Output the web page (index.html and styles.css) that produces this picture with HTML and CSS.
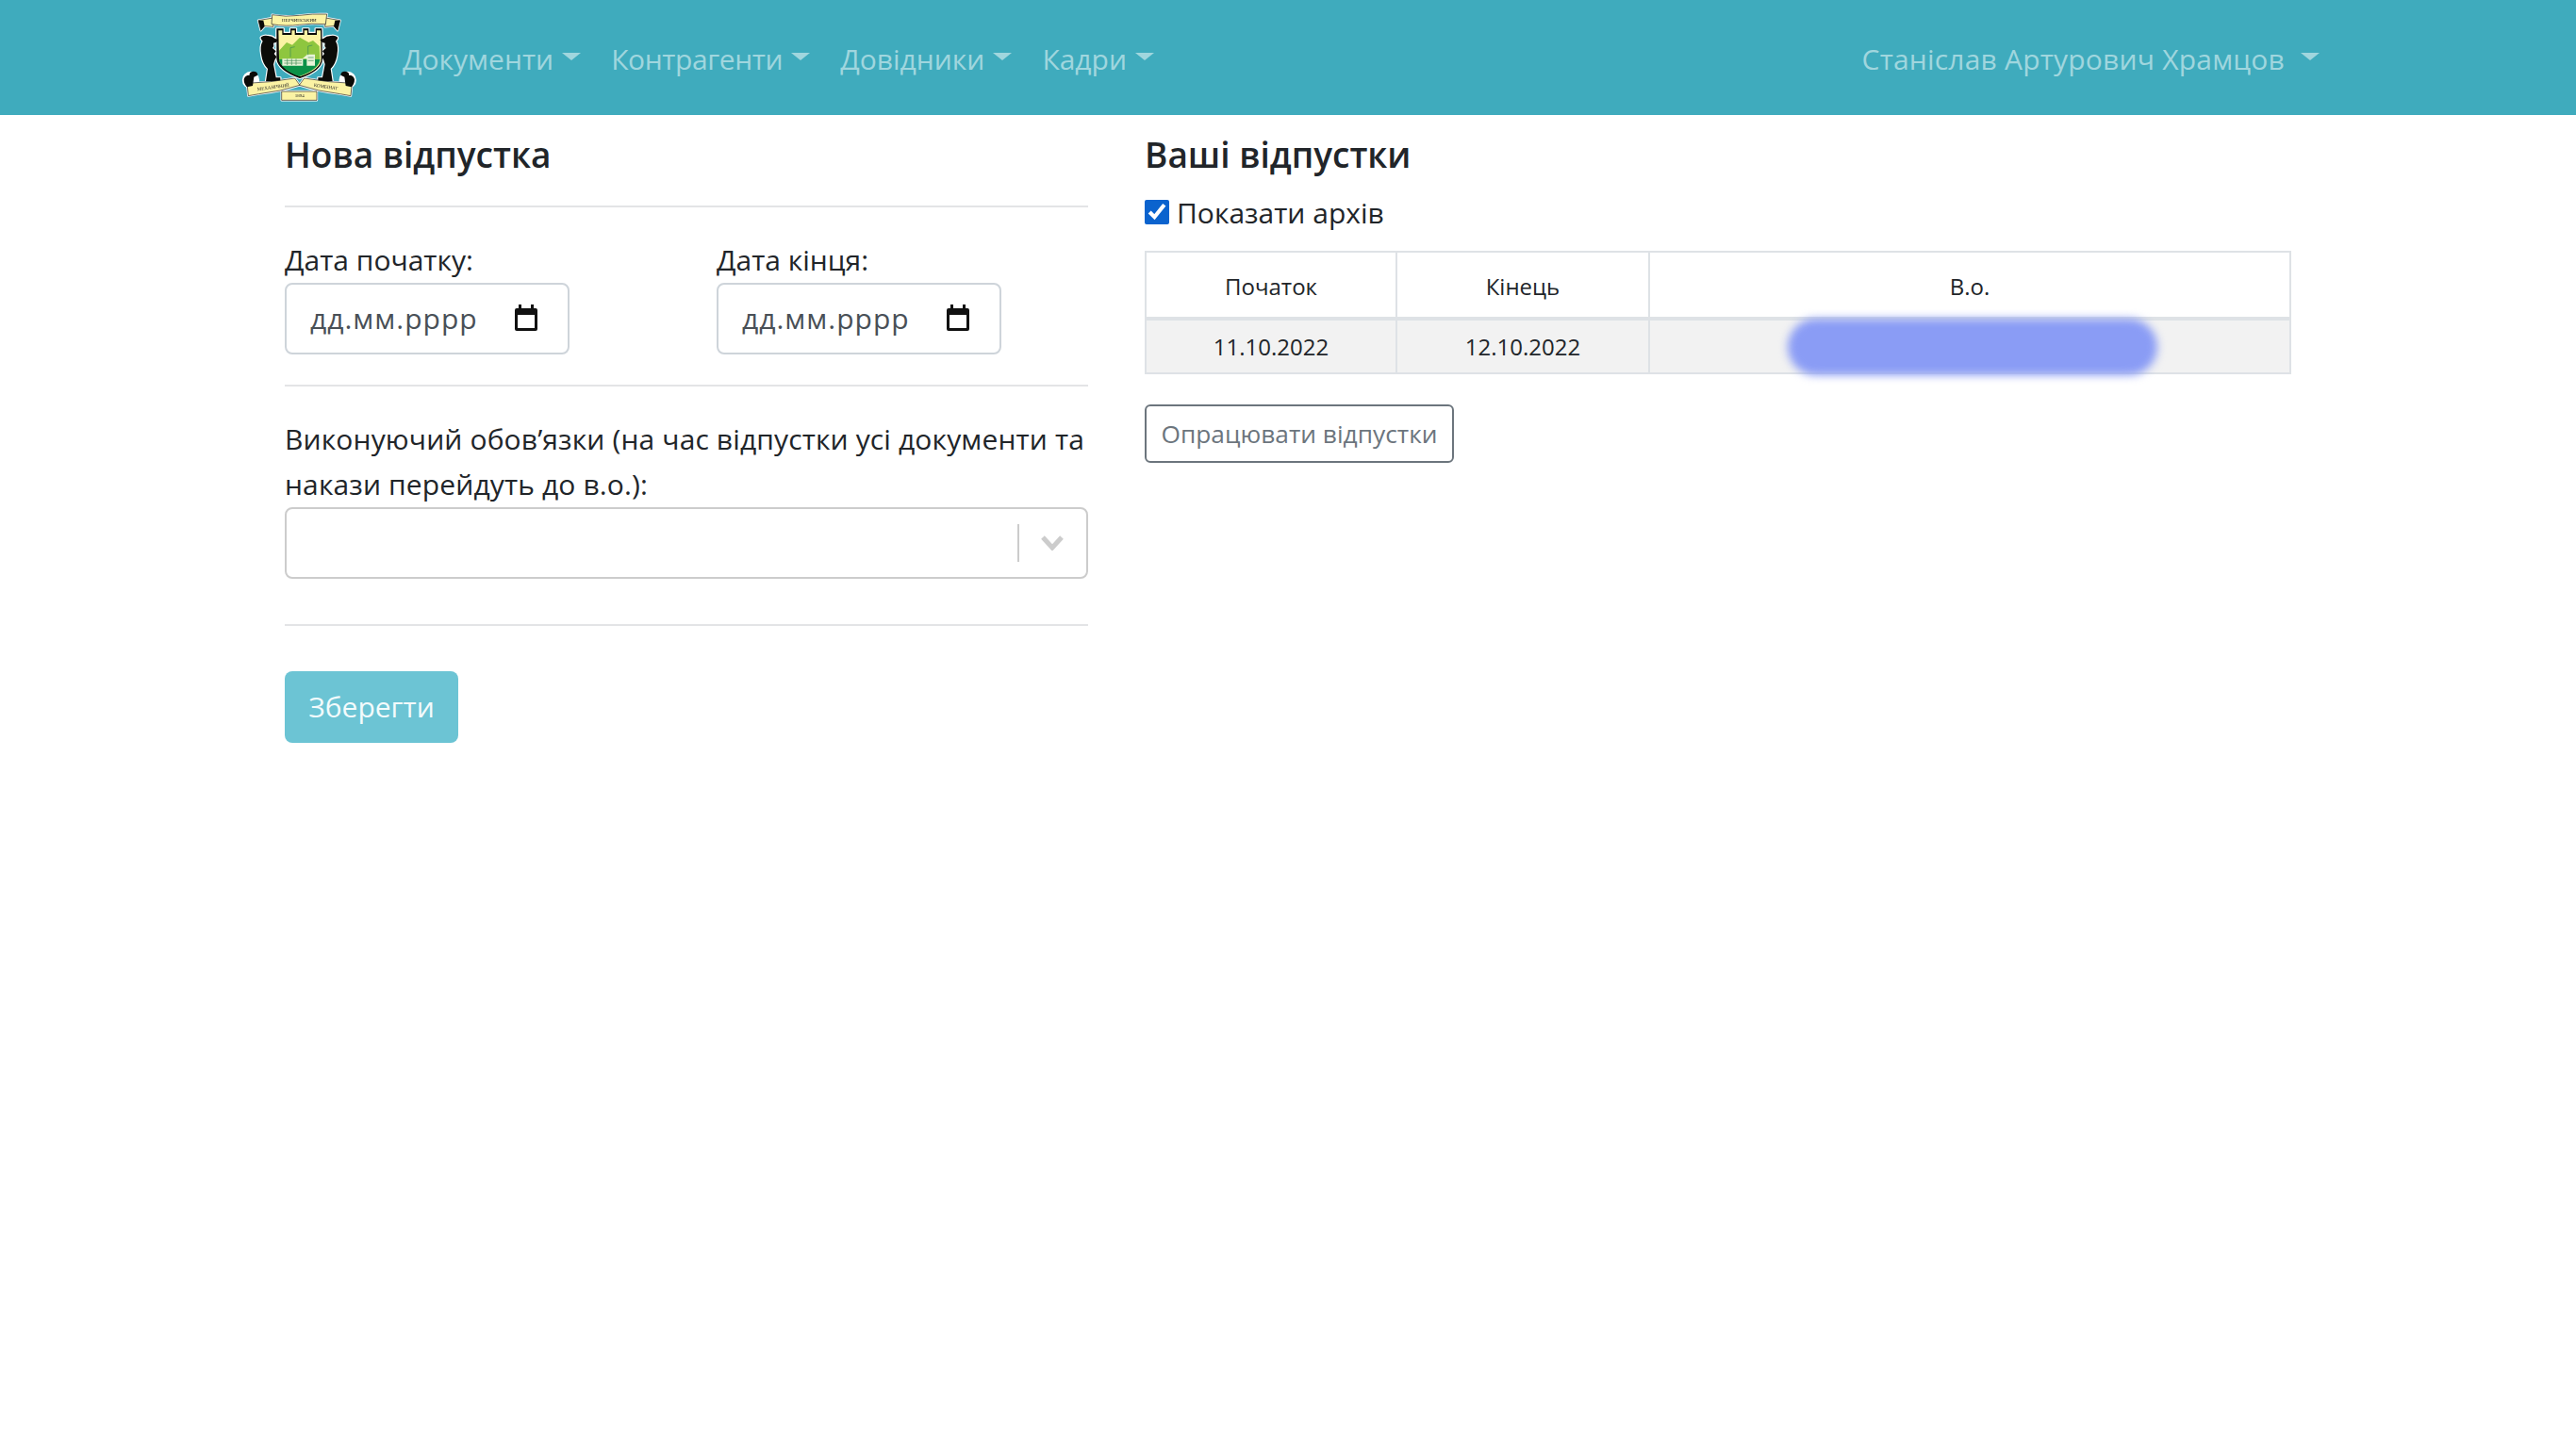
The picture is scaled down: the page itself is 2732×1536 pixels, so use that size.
FILE: index.html
```html
<!DOCTYPE html>
<html lang="uk">
<head>
<meta charset="utf-8">
<title>Відпустки</title>
<link rel="stylesheet" href="styles.css">
</head>
<body>
<header class="navbar">
  <a class="brand" href="#">
    <svg class="logo" viewBox="60 30 405 315" width="135" height="105" aria-label="Герб">
      <defs>
        <path id="bear" d="M142 120q10-6 20-3q14 0 22 8l12 5-8 8-8 2q3 10-3 16l11 10-6 8 8 10-6 10-4 14 8 42h14v12h-46l6-40q-16-16-20-42q-6-30 4-46q-10-10-4-14z"/>
        <path id="tail-top" d="M178 60l-46 8 8 32 12-14 28 2z"/>
        <path id="band-low" d="M96 268q70-2 152-16l16 22q-60 20-130 28l-34 6z"/>
        <path id="shield" d="M190 94h22v14h22V94h18v14h22V94h18v14h22V94h20l2 97q-2 37-72 61q-68-24-74-61z"/>
        <path id="band-top" d="M176 50q44 8 86 2t88-4l-4 32q-44-4-84 2t-88-2z"/>
      </defs>
      <g class="halo">
        <use href="#shield"/>
        <use href="#bear"/>
        <use href="#bear" transform="matrix(-1 0 0 1 524 0)"/>
        <use href="#band-top"/>
        <use href="#tail-top"/>
        <use href="#tail-top" transform="matrix(-1 0 0 1 524 0)"/>
        <use href="#band-low"/>
        <use href="#band-low" transform="matrix(-1 0 0 1 526 0)"/>
        <circle cx="108" cy="258" r="24"/>
        <circle cx="416" cy="258" r="24"/>
        <rect x="206" y="294" width="112" height="28"/>
      </g>
      <g>
        <use class="black" href="#shield"/>
        <path class="cream" d="M196 100h12v14h30v-14h10v14h30v-14h10v14h30v-14h12l2 91q-2 33-66 55q-62-22-68-55z"/>
        <path class="green" d="M198 164l24-26 18 8 24-24 28 16 14-6 20 18 2 41q-2 31-64 54q-60-21-66-54z"/>
        <path class="dark" d="M198 192h130v1q-4 31-66 53q-58-21-64-54z"/>
        <path class="white" d="M208 190h66v22h-66zM286 176h26v36h-26zM272 190l16-14v14z"/>
        <path class="line" d="M214 196h56M214 204h56M290 186h18M290 196h18M224 190v20M238 190v20M252 190v20M234 155v30M290 150v28M234 155l14-3M290 150l14-3"/>
        <use class="black" href="#bear"/>
        <use class="black" href="#bear" transform="matrix(-1 0 0 1 524 0)"/>
        <use class="cream ink" href="#tail-top"/>
        <use class="cream ink" href="#tail-top" transform="matrix(-1 0 0 1 524 0)"/>
        <use class="cream ink" href="#band-top"/>
        <path class="black" d="M132 68l8 32 12-14-4-18zM392 68l-8 32-12-14 4-18z"/>
        <use class="cream ink" href="#band-low"/>
        <use class="cream ink" href="#band-low" transform="matrix(-1 0 0 1 526 0)"/>
        <rect class="cream ink" x="206" y="294" width="112" height="28"/>
        <path class="black" d="M86 256q2-14 18-14q-2-10 12-12q14 0 14 12l-12 6-4 28-18 4q-10-10-10-24zM438 256q-2-14-18-14q2-10-12-12q-14 0-14 12l12 6 4 28 18 4q10-10 10-24z"/>
        <text class="motto" x="262" y="71" text-anchor="middle">НЕРЧИНСЬКИЙ</text>
        <text class="motto" x="180" y="285" text-anchor="middle" transform="rotate(-8 180 285)">МЕХАНІЧНИЙ</text>
        <text class="motto" x="346" y="284" text-anchor="middle" transform="rotate(8 346 284)">КОМБІНАТ</text>
        <text class="motto" x="263" y="313" text-anchor="middle">1894</text>
      </g>
    </svg>
  </a>
  <nav class="nav-main">
    <a class="nav-link" href="#">Документи</a>
    <a class="nav-link nav-tight" href="#">Контрагенти</a>
    <a class="nav-link" href="#">Довідники</a>
    <a class="nav-link" href="#">Кадри</a>
  </nav>
  <a class="nav-link nav-user" href="#">Станіслав Артурович Храмцов</a>
</header>

<main class="content">
  <section class="col-form">
    <h4 class="title">Нова відпустка</h4>
    <hr class="rule rule-first">
    <div class="dates">
      <div class="field">
        <label class="label">Дата початку:</label>
        <div class="date-input"><span class="date-mask">дд.мм.рррр</span>
          <svg class="cal" viewBox="0 0 24 28"><path d="M2 4h20a2 2 0 0 1 2 2v20a2 2 0 0 1-2 2H2a2 2 0 0 1-2-2V6a2 2 0 0 1 2-2zm1 7v14h18V11z"/><path d="M4 0h3v5H4zM17 0h3v5h-3z"/></svg>
        </div>
      </div>
      <div class="field">
        <label class="label">Дата кінця:</label>
        <div class="date-input"><span class="date-mask">дд.мм.рррр</span>
          <svg class="cal" viewBox="0 0 24 28"><path d="M2 4h20a2 2 0 0 1 2 2v20a2 2 0 0 1-2 2H2a2 2 0 0 1-2-2V6a2 2 0 0 1 2-2zm1 7v14h18V11z"/><path d="M4 0h3v5H4zM17 0h3v5h-3z"/></svg>
        </div>
      </div>
    </div>
    <hr class="rule rule-second">
    <label class="label label-wide">Виконуючий обов’язки (на час відпустки усі документи та накази перейдуть до в.о.):</label>
    <div class="select">
      <span class="select-sep"></span>
      <svg class="chev" viewBox="0 0 24 16"><path d="M2 2l10 11L22 2"/></svg>
    </div>
    <hr class="rule rule-third">
    <button class="btn-save" type="button">Зберегти</button>
  </section>

  <section class="col-list">
    <h4 class="title">Ваші відпустки</h4>
    <label class="archive"><input class="check" type="checkbox" checked>Показати архів</label>
    <table class="grid">
      <thead>
        <tr><th class="c1">Початок</th><th class="c2">Кінець</th><th>В.о.</th></tr>
      </thead>
      <tbody>
        <tr><td>11.10.2022</td><td>12.10.2022</td><td class="cell-blur"><span class="blur"></span></td></tr>
      </tbody>
    </table>
    <button class="btn-outline" type="button">Опрацювати відпустки</button>
  </section>
</main>
</body>
</html>
```
FILE: styles.css
```css
* { box-sizing: border-box; }
html, body { margin: 0; padding: 0; background: #fff; }
body {
  font-family: "Open Sans", "Noto Sans", sans-serif;
  font-size: 30px;
  line-height: 48px;
  color: #212529;
  min-height: 1536px;
}
a { text-decoration: none; color: inherit; }

.navbar {
  display: flex;
  align-items: center;
  height: 122px;
  padding-left: 250px;
  background: #3fabbd;
}
.brand { display: flex; margin-right: 42px; padding-top: 1px; }
.logo { display: block; filter: blur(.4px); }
.halo { fill: #fff; stroke: #fff; stroke-width: 7; stroke-linejoin: round; }
.black { fill: #0b0b08; }
.cream { fill: #fbf3a4; }
.green { fill: #8ec63f; }
.dark { fill: #0a9148; }
.white { fill: #e8f4d8; }
.line { fill: none; stroke: #3d8c56; stroke-width: 2; }
.ink { stroke: #222; stroke-width: 2; stroke-linejoin: round; }
.motto { font-size: 15px; font-family: "Liberation Serif", serif; fill: #222; }

.nav-main { display: flex; gap: 32px; }
.nav-link {
  display: flex;
  align-items: center;
  padding-top: 3px;
  color: #a0d6de;
  white-space: nowrap;
}
.nav-link::after {
  content: "";
  margin-left: 9px;
  margin-top: -5px;
  border-top: 8px solid #a0d6de;
  border-left: 10px solid transparent;
  border-right: 10px solid transparent;
}
.nav-tight { letter-spacing: -.4px; }
.nav-user { margin-left: auto; margin-right: 272px; letter-spacing: .2px; }
.nav-user::after { margin-left: 17px; }

.content {
  display: flex;
  gap: 60px;
  padding-left: 302px;
}
.col-form { width: 852px; flex: none; }
.col-list { width: 1216px; flex: none; }
.title {
  margin: 0;
  padding-top: 18px;
  font-size: 37px;
  line-height: 48px;
  font-weight: 600;
}
.rule { height: 2px; margin: 0; border: 0; background: #e3e4e6; }
.rule-first { margin-top: 30px; }
.rule-second { margin-top: 32px; margin-bottom: 32px; }
.rule-third { margin-top: 48px; }
.dates {
  display: grid;
  grid-template-columns: 458px 1fr;
  padding-top: 32px;
}
.label { display: block; }
.label-wide { letter-spacing: .13px; }
.date-input {
  display: flex;
  align-items: center;
  justify-content: space-between;
  width: 302px;
  height: 76px;
  padding: 0 32px 0 25px;
  border: 2px solid #ced4da;
  border-radius: 8px;
  color: #495057;
}
.date-mask { letter-spacing: 1px; }
.cal { width: 24px; height: 28px; margin-bottom: 2px; fill: #111; }
.select {
  display: flex;
  align-items: center;
  justify-content: flex-end;
  height: 76px;
  border: 2px solid #ccc;
  border-radius: 8px;
  padding-right: 24px;
}
.select-sep { width: 2px; height: 40px; background: #ccc; margin-right: 23px; }
.chev { width: 24px; height: 16px; fill: none; stroke: #ccc; stroke-width: 5; }
.btn-save {
  display: block;
  width: 184px;
  height: 76px;
  margin-top: 48px;
  padding: 0;
  border: 0;
  border-radius: 8px;
  background: #6cc4d4;
  color: #f3fbfc;
  font: inherit;
}
.archive { display: flex; align-items: center; height: 48px; margin-top: 13px; padding-top: 2px; }
.check {
  width: 26px;
  height: 26px;
  margin: 0 8px 2px 0;
  accent-color: #0b63ce;
}
.grid {
  width: 1216px;
  margin-top: 17px;
  border-collapse: collapse;
  table-layout: fixed;
  font-size: 24px;
  line-height: 36px;
}
.grid th, .grid td {
  border: 2px solid #dee2e6;
  text-align: center;
  font-weight: 400;
  padding: 0;
}
.grid th { height: 71px; padding-top: 4px; border-bottom-width: 4px; }
.grid td { height: 58px; background: #f2f2f2; }
.c1 { width: 266px; }
.c2 { width: 268px; }
.cell-blur { position: relative; }
.blur {
  position: absolute;
  left: 146px;
  top: -2px;
  width: 392px;
  height: 60px;
  border-radius: 30px;
  background: #8a9cf5;
  filter: blur(5px);
}
.btn-outline {
  display: block;
  width: 328px;
  height: 62px;
  margin-top: 32px;
  padding: 0;
  border: 2px solid #6c757d;
  border-radius: 6px;
  background: #fff;
  color: #6c757d;
  font: inherit;
  font-size: 26.3px;
}
```
